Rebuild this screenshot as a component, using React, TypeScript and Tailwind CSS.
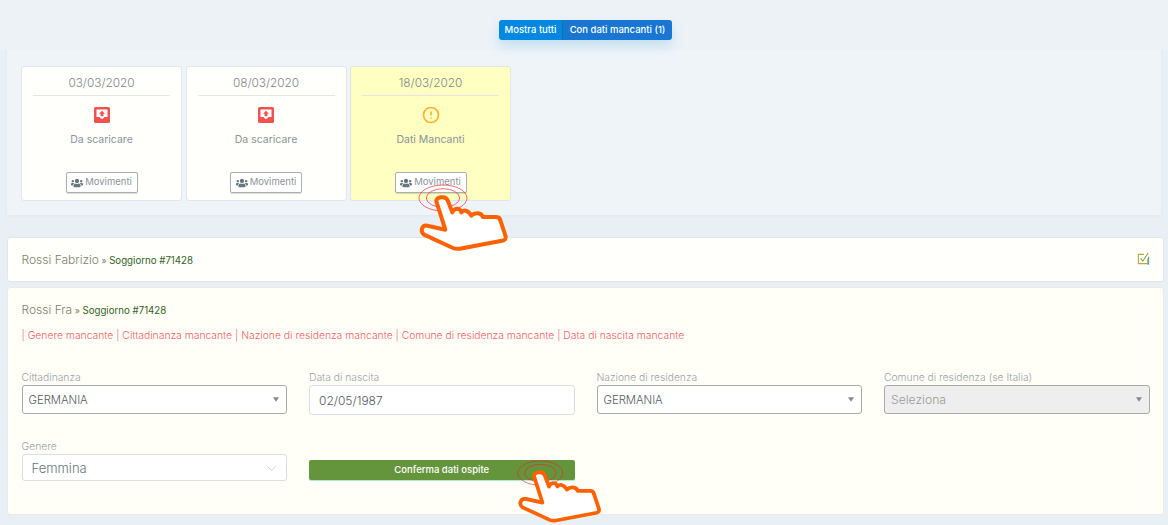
import { CircleAlert, ChevronDown } from "lucide-react";
import { FaUsers } from "react-icons/fa";

const font = "font-['Inter','Noto_Sans',sans-serif]";

const DownloadIcon = () => (
    <svg width="16" height="16" viewBox="0 0 16 16">
        <rect x="0" y="0" width="16" height="16" rx="1.5" fill="#ef5350" />
        <path d="M2.5 2.5h11v7.5h-3.2c-.4 1.2-1.2 1.8-2.3 1.8s-1.9-.6-2.3-1.8H2.5z" fill="#fff" />
        <path d="M8 3.8l3 3h-1.6v2.4H6.6V6.8H5z" fill="#ef5350" />
    </svg>
);

const Triangle = ({ color = "#888" }: { color?: string }) => (
    <svg width="6" height="5" viewBox="0 0 8 6">
        <path d="M0 0h8L4 6z" fill={color} />
    </svg>
);

const CheckBoxIcon = () => (
    <svg className="mb-[4px]" width="13" height="13" viewBox="0 0 14 14" fill="none" strokeWidth="1.2">
        <path d="M7.5 2.5H1.5v10h10V7" stroke="#b9a84a" />
        <path d="M12.5 5v8h-1" stroke="#4aa6c0" />
        <path d="M3.8 6.8l2.6 3L12 1.2" stroke="#8fa84a" />
    </svg>
);

// the orange pointer with the red rings round its fingertip
const Hand = ({ className, width, height }: { className: string; width: number; height: number }) => (
    <div className={`absolute ${className}`}>
        <svg width={width} height={height} viewBox="-6 -30 282 206" fill="none">
            <ellipse cx="75" cy="15" rx="72" ry="39" stroke="#e8212e" strokeWidth="2" />
            <ellipse cx="75" cy="15" rx="50" ry="28" stroke="#e8212e" strokeWidth="2" />
            <path
                d="M55 25C52 12 85 5 90 25L103 58C108 45 125 42 130 58C135 50 150 50 160 68C170 58 190 58 195 72L235 72C243 72 247 78 248 85L263 130C265 138 260 142 252 143L125 167C118 168 112 168 105 165L18 125C5 115 12 95 28 98L82 110Z"
                fill="#fff"
                stroke="#ff6000"
                strokeWidth="12"
                strokeLinejoin="round"
            />
        </svg>
    </div>
);

const StayCard = ({ date, label, warning }: { date: string; label: string; warning?: boolean }) => (
    <div
        className={`w-[161px] h-[135px] px-[11px] flex flex-col items-center rounded-[3px] border border-[#e1e6ea] ${
            warning ? "bg-[#ffffc1]" : "bg-[#fffffb]"
        }`}
    >
        <div className="w-full h-[29px] border-b border-[#e4e8e4] text-center text-[11.8px] leading-[32px] font-light text-[#7d878e]">
            {date}
        </div>
        <div className="mt-[11px] h-[16px] flex items-center">
            {warning ? <CircleAlert size={18} color="#ffb22b" strokeWidth={2.2} /> : <DownloadIcon />}
        </div>
        <div className="mt-[10px] h-[14px] text-[10.5px] leading-[14px] text-[#8a9499]">{label}</div>
        <button className="mt-[25px] w-[72px] h-[21px] flex items-center justify-center gap-[2px] rounded-[2px] bg-white border border-[#a9afb3] shadow-[0_1px_1px_rgba(0,0,0,0.15)] text-[9.5px] text-[#8a9499]">
            <FaUsers size={12} color="#67757c" />
            Movimenti
        </button>
    </div>
);

const GuestName = ({ name }: { name: string }) => (
    <div className="h-[14px] flex items-baseline gap-[2.5px] leading-[14px]">
        <span className="text-[12px] font-light text-[#7d7f6a]">{name}</span>
        <span className="text-[9px] text-[#7d7f6a]">»</span>
        <span className="text-[9.7px] text-[#35611f]">Soggiorno #71428</span>
    </div>
);

const Field = ({ label, children }: { label: string; children: React.ReactNode }) => (
    <div className="flex flex-col">
        <div className="h-[15px] text-[10.3px] leading-[14px] font-light text-[#98a2a8]">{label}</div>
        {children}
    </div>
);

const SelectBox = ({ value, disabled }: { value: string; disabled?: boolean }) => (
    <div
        className={`h-[29px] pl-[6px] pr-[7px] flex items-center justify-between rounded-[3px] border border-[#aaaaaa] font-light ${
            disabled ? "bg-[#eeeeee] text-[#9a9a9a] text-[12.2px]" : "bg-white text-[#555c60] text-[11.3px]"
        }`}
    >
        <span className="pt-[1px]">{value}</span>
        <Triangle />
    </div>
);

export default function App() {
    return (
        <div className={`relative w-[1168px] h-[525px] overflow-hidden bg-[#e9f0f5] ${font}`}>
            {/* Filter buttons */}
            <div className="h-[50px] pt-[20px] flex justify-center bg-[#edf2f7]">
                <div className="flex h-[20px] ml-[3px] rounded-[3px] text-[9.5px] font-medium leading-[19px] text-white shadow-[0_6px_12px_rgba(2,136,224,0.18)]">
                    <div className="w-[64px] text-center rounded-l-[3px] border-r border-[#0c7a9a] bg-[#0288e0]">Mostra tutti</div>
                    <div className="w-[109px] text-center rounded-r-[3px] bg-[#1976d2]">Con dati mancanti (1)</div>
                </div>
            </div>

            {/* Stay cards */}
            <div className="mx-[7px] h-[165px] pt-[16px] pl-[14px] flex gap-[3.5px] bg-[#eff4f9] shadow-[0_1px_3px_rgba(0,0,0,0.04)]">
                <StayCard date="03/03/2020" label="Da scaricare" />
                <StayCard date="08/03/2020" label="Da scaricare" />
                <StayCard date="18/03/2020" label="Dati Mancanti" warning />
            </div>

            {/* Guest already complete */}
            <div className="mt-[22px] mx-[7px] w-[1157px] h-[45px] pl-[13.5px] pr-[13px] pt-[1px] flex items-center justify-between rounded-[3px] border border-[#e1e6ea] bg-[#fffffb]">
                <GuestName name="Rossi Fabrizio" />
                <CheckBoxIcon />
            </div>

            {/* Guest with missing data */}
            <div className="mt-[5px] mx-[7px] w-[1157px] h-[228px] px-[13.5px] pt-[15px] rounded-[3px] border border-[#e8ebe6] bg-[#fffff8]">
                <GuestName name="Rossi Fra" />
                <div className="mt-[11px] h-[14px] text-[10.35px] leading-[14px] font-light text-[#ef5f68] whitespace-nowrap">
                    | Genere mancante | Cittadinanza mancante | Nazione di residenza mancante | Comune di residenza mancante | Data di nascita mancante
                </div>

                <div className="mt-[28px] grid grid-cols-4 gap-x-[22px] w-[1128px]">
                    <Field label="Cittadinanza">
                        <SelectBox value="GERMANIA" />
                    </Field>
                    <Field label="Data di nascita">
                        <div className="h-[30px] pl-[9px] pt-[2px] flex items-center rounded-[3px] border border-[#dcdfe0] bg-white text-[12px] font-light text-[#4f5a62]">
                            02/05/1987
                        </div>
                    </Field>
                    <Field label="Nazione di residenza">
                        <SelectBox value="GERMANIA" />
                    </Field>
                    <Field label="Comune di residenza (se Italia)">
                        <SelectBox value="Seleziona" disabled />
                    </Field>

                    <div className="mt-[24px]">
                        <Field label="Genere">
                            <div className="h-[27px] pl-[9px] pr-[7px] pt-[2px] flex items-center justify-between rounded-[3px] border border-[#dcdfe0] bg-white text-[13px] font-light text-[#67757c]">
                                Femmina
                                <ChevronDown size={15} color="#b5bcc0" strokeWidth={1.1} />
                            </div>
                        </Field>
                    </div>
                    <button className="mt-[45px] h-[20px] rounded-[2px] bg-[#64953c] text-[9.5px] font-medium text-white shadow-[0_1px_1px_rgba(90,200,160,0.5)]">
                        Conferma dati ospite
                    </button>
                </div>
            </div>

            <Hand className="left-[416px] top-[183px]" width={94} height={68.7} />
            <Hand className="left-[515px] top-[459px]" width={88} height={64.3} />
        </div>
    );
}
